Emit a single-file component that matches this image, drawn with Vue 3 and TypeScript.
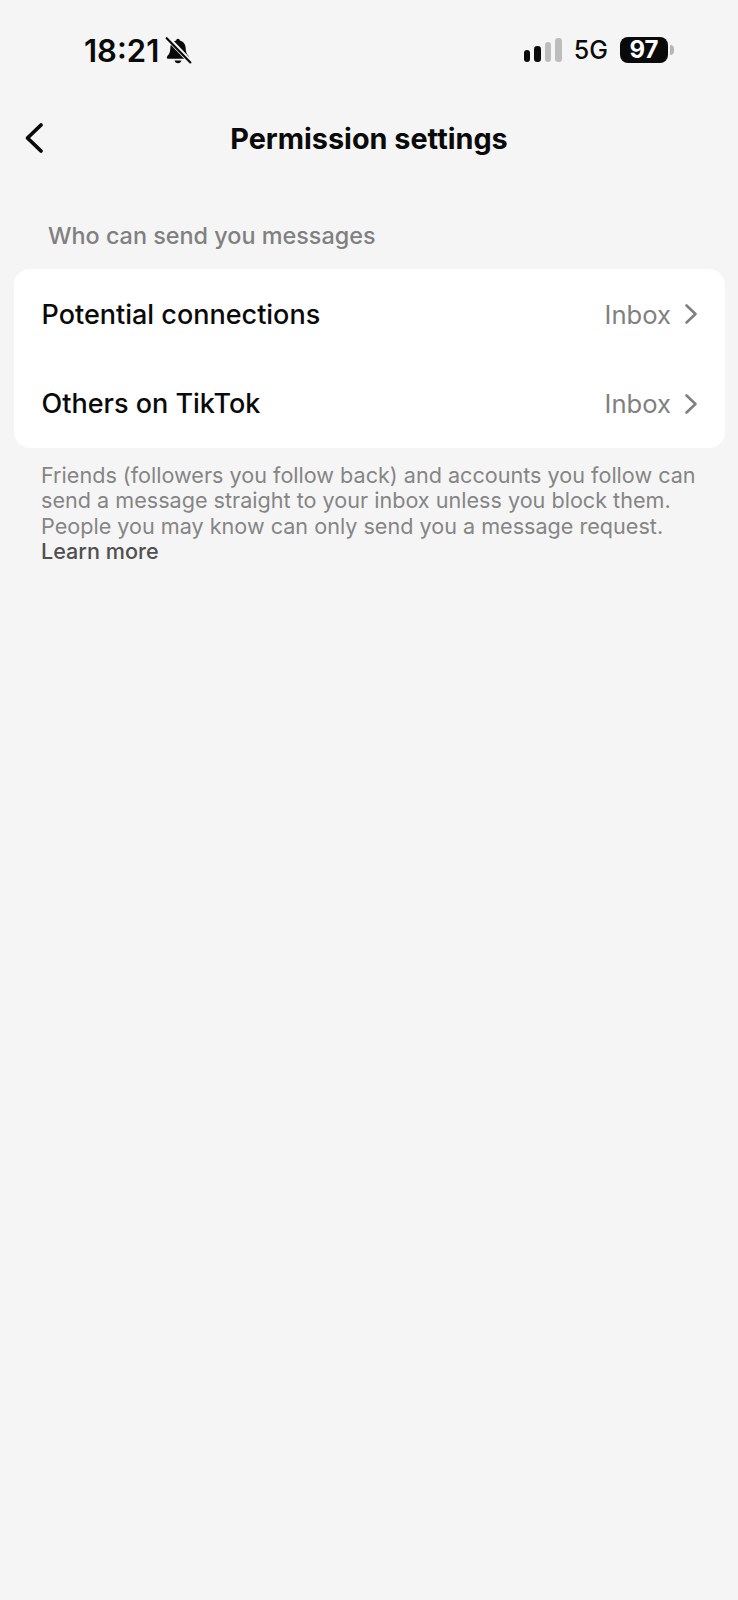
<template>
  <div class="screen">
    <div class="status-bar">
      <div class="status-left">
        <span class="clock">18:21</span>
        <svg class="bell" width="28" height="28" viewBox="0 0 26 26">
          <path d="M13 2.500c.9 0 1.600.7 1.700 1.600 3.300.8 5.300 3.400 5.400 7 .1 3.400.8 5.300 2.400 7.100.5.600.9 1.100.9 1.700 0 .8-.6 1.300-1.500 1.300H4.100c-.9 0-1.500-.5-1.500-1.300 0-.6.4-1.100.9-1.700 1.600-1.800 2.300-3.700 2.400-7.100.1-3.600 2.100-6.200 5.400-7 .1-.9.800-1.600 1.700-1.600z" fill="#0a0a0a" />
          <path d="M9.800 22.800h6.400c-.3 1.500-1.600 2.500-3.200 2.500s-2.900-1-3.200-2.500z" fill="#0a0a0a" />
          <path d="M3 1.500 24.500 24" stroke="#f5f5f5" stroke-width="4.500" fill="none" />
          <path d="M2.500 2 24.500 24.500" stroke="#0a0a0a" stroke-width="2" stroke-linecap="round" fill="none" />
        </svg>
      </div>
      <div class="status-right">
        <div class="signal">
          <span v-for="bar in signalBars" :key="bar.height" class="signal-bar" :class="{ dim: bar.dim }" :style="{ height: bar.height + 'px' }"></span>
        </div>
        <span class="network">5G</span>
        <div class="battery">
          <span class="battery-body">97</span>
          <span class="battery-cap"></span>
        </div>
      </div>
    </div>

    <header class="nav">
      <svg class="back" width="24" height="34" viewBox="0 0 24 34">
        <path d="M20 4 6.500 17 20 30" fill="none" stroke="#0a0a0a" stroke-width="3.800" stroke-linecap="round" stroke-linejoin="round" />
      </svg>
      <h1 class="title">Permission settings</h1>
    </header>

    <div class="section-label">Who can send you messages</div>

    <div class="card">
      <div v-for="row in rows" :key="row" class="row">
        <span class="row-name">{{ row }}</span>
        <span class="row-value">Inbox</span>
        <svg class="chevron" width="14" height="22" viewBox="0 0 14 22">
          <path d="M2.500 2.500 11.500 11l-9 8.500" fill="none" stroke="#808080" stroke-width="2.600" stroke-linecap="round" stroke-linejoin="round" />
        </svg>
      </div>
    </div>

    <p class="note">
      Friends (followers you follow back) and accounts you follow can<br />
      send a message straight to your inbox unless you block them.<br />
      People you may know can only send you a message request.<br />
      <span class="learn">Learn more</span>
    </p>
  </div>
</template>

<script setup lang="ts">
const signalBars = [
  { height: 12, dim: false },
  { height: 16, dim: false },
  { height: 20, dim: true },
  { height: 24, dim: true },
]

const rows = ['Potential connections', 'Others on TikTok']
</script>

<style scoped>
.screen {
  min-height: 1600px;
  background: #f5f5f5;
  font-family: Inter, "Liberation Sans", sans-serif;
  color: #0a0a0a;
  box-sizing: border-box;
}

.status-bar {
  height: 100px;
  display: flex;
  justify-content: space-between;
  align-items: center;
  padding: 0 64px 0 84px;
}

.status-left,
.status-right {
  display: flex;
  align-items: center;
}

.clock {
  font-size: 31px;
  font-weight: 600;
}

.bell {
  margin-left: 5px;
}

.signal {
  display: flex;
  align-items: flex-end;
  gap: 4px;
}

.signal-bar {
  width: 6.500px;
  border-radius: 3.250px;
  background: #0a0a0a;
}

.signal-bar.dim {
  background: #bdbdbd;
}

.network {
  margin-left: 12px;
  font-size: 25px;
  font-weight: 500;
}

.battery {
  margin-left: 12px;
  display: flex;
  align-items: center;
}

.battery-body {
  width: 48px;
  height: 26px;
  border-radius: 8px;
  background: #0a0a0a;
  color: #fff;
  font-size: 24px;
  font-weight: 700;
  line-height: 26px;
  text-align: center;
}

.battery-cap {
  width: 4px;
  height: 10px;
  margin-left: 2px;
  border-radius: 0 4px 4px 0;
  background: #b5b5b5;
}

.nav {
  position: relative;
  height: 76px;
  display: flex;
  align-items: center;
  justify-content: center;
}

.back {
  position: absolute;
  left: 21px;
  top: 21px;
}

.title {
  margin: 0;
  font-size: 28.800px;
  font-weight: 700;
}

.section-label {
  margin: 45px 0 0 48px;
  height: 48px;
  font-size: 23.400px;
  font-weight: 500;
  line-height: 30px;
  color: #808080;
}

.card {
  margin: 0 13px 0 14px;
  height: 179px;
  border-radius: 16px;
  background: #fff;
}

.row {
  height: 89.500px;
  display: flex;
  align-items: center;
  padding: 1px 27px 0 27.500px;
  box-sizing: border-box;
}

.row-name {
  flex: 1;
  font-size: 27px;
  font-weight: 500;
}

.row-value {
  font-size: 25.600px;
  color: #808080;
}

.chevron {
  margin-left: 13px;
}

.note {
  margin: 15px 0 0 41px;
  font-size: 21.600px;
  line-height: 25.300px;
  color: #858585;
  white-space: nowrap;
}

.learn {
  font-weight: 500;
  color: #505050;
}
</style>

<style>
html,
body {
  background: #f5f5f5;
}
</style>
